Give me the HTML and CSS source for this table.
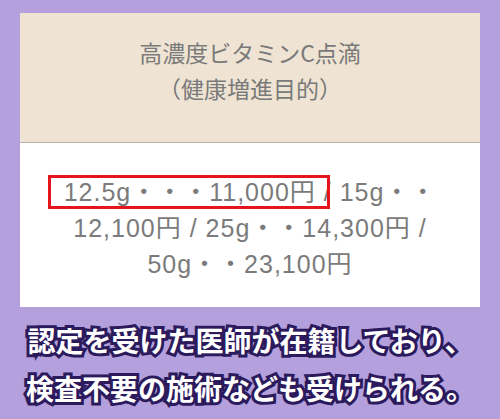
FILE: index.html
```html
<!DOCTYPE html>
<html lang="ja">
<head>
<meta charset="utf-8">
<link rel="stylesheet" href="styles.css">
</head>
<body>
<div class="page">
  <div class="panel">
    <div class="panel-head">
      <p class="head-line">高濃度ビタミンC点滴</p>
      <p class="head-line">（健康増進目的）</p>
    </div>
    <div class="panel-body">
      <p class="price"><span class="mark">12.5g・・・11,000円</span> / 15g・・12,100円 / 25g・・14,300円 / 50g・・23,100円</p>
    </div>
  </div>
  <p class="caption">認定を受けた医師が在籍しており、<br>検査不要の施術なども受けられる。</p>
</div>
</body>
</html>
```
FILE: styles.css
```css
html, body {
  margin: 0;
  padding: 0;
}
body {
  background: #b3a0dd;
  font-family: "Noto Sans CJK JP", "Noto Sans", sans-serif;
  width: 500px;
  height: 419px;
  overflow: hidden;
}
.page {
  padding: 13px 20px 0;
}
.panel {
  display: flex;
  flex-direction: column;
}
.panel-head {
  background: #efe4d3;
  border-bottom: 1px solid #b9b2a8;
  padding-top: 21px;
  box-sizing: border-box;
  height: 130px;
}
.head-line {
  margin: 0;
  text-align: center;
  color: #7a7a7a;
  font-size: 23px;
  line-height: 36px;
}
.panel-body {
  background: #ffffff;
  height: 164px;
  box-sizing: border-box;
  padding: 31px 40px 0;
}
.price {
  margin: 0;
  text-align: center;
  color: #7b7b7b;
  font-family: "Liberation Sans", "Noto Sans CJK JP", sans-serif;
  font-size: 25px;
  letter-spacing: 1px;
  line-height: 36px;
}
.mark {
  position: relative;
}
.mark::after {
  content: "";
  position: absolute;
  left: -16px;
  right: -14px;
  top: -3px;
  bottom: -3px;
  border: 3px solid #e5151b;
}
.caption {
  margin: 9px 0 0;
  text-align: center;
  color: #ffffff;
  font-weight: bold;
  font-size: 28px;
  line-height: 48px;
  -webkit-text-stroke: 6px #2b1a5c;
  paint-order: stroke fill;
}
```
